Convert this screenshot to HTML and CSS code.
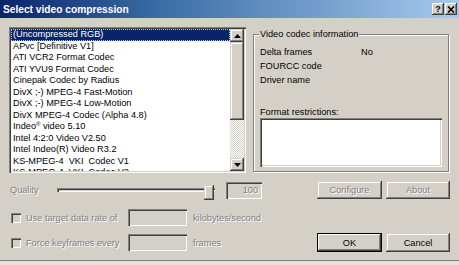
FILE: index.html
```html
<!DOCTYPE html>
<html lang="en">
<head>
    <meta charset="UTF-8">
    <title>Select video compression</title>
    <link rel="stylesheet" href="styles.css">
</head>
<body>
    <div class="window">
        <div class="titlebar">
            <span class="title">Select video compression</span>
            <div class="title-buttons">
                <span class="tbtn">?</span>
                <span class="tbtn">
                    <svg width="8" height="7" viewBox="0 0 8 7"><path d="M1 0.5 L7 6.5 M7 0.5 L1 6.5" stroke="#000" stroke-width="1.6"/></svg>
                </span>
            </div>
        </div>

        <div class="content">
            <div class="top">
                <div class="listbox">
                    <ul class="items">
                        <li class="selected">(Uncompressed RGB)</li>
                        <li>APvc [Definitive V1]</li>
                        <li>ATI VCR2 Format Codec</li>
                        <li>ATI YVU9 Format Codec</li>
                        <li>Cinepak Codec by Radius</li>
                        <li>DivX ;-) MPEG-4 Fast-Motion</li>
                        <li>DivX ;-) MPEG-4 Low-Motion</li>
                        <li>DivX MPEG-4 Codec (Alpha 4.8)</li>
                        <li>Indeo<sup>®</sup> video 5.10</li>
                        <li>Intel 4:2:0 Video V2.50</li>
                        <li>Intel Indeo(R) Video R3.2</li>
                        <li>KS-MPEG-4&nbsp; VKI&nbsp; Codec V1</li>
                        <li>KS-MPEG-4&nbsp; VKI&nbsp; Codec V2</li>
                    </ul>
                    <div class="scrollbar">
                        <div class="sb-btn">
                            <svg width="7" height="4" viewBox="0 0 7 4"><polygon points="3.5,0 7,4 0,4" fill="#000"/></svg>
                        </div>
                        <div class="sb-track"><div class="sb-thumb"></div></div>
                        <div class="sb-btn">
                            <svg width="7" height="4" viewBox="0 0 7 4"><polygon points="0,0 7,0 3.5,4" fill="#000"/></svg>
                        </div>
                    </div>
                </div>

                <div class="groupbox">
                    <span class="legend">Video codec information</span>
                    <div class="info">
                        <span>Delta frames</span><span>No</span>
                        <span>FOURCC code</span><span></span>
                        <span>Driver name</span><span></span>
                    </div>
                    <div class="restrict-label">Format restrictions:</div>
                    <div class="textarea"></div>
                </div>
            </div>

            <div class="row row-quality">
                <span class="quality-label disabled">Quality</span>
                <div class="slider">
                    <div class="slider-track"></div>
                    <div class="slider-thumb"></div>
                </div>
                <div class="edit edit-quality disabled">100</div>
                <div class="buttons">
                    <div class="btn disabled">Configure</div>
                    <div class="btn btn-narrow disabled">About</div>
                </div>
            </div>

            <div class="row row-rate">
                <span class="checkbox"></span>
                <span class="check-label disabled">Use target data rate of</span>
                <div class="edit"></div>
                <span class="unit disabled">kilobytes/second</span>
            </div>

            <div class="row row-keys">
                <span class="checkbox"></span>
                <span class="check-label disabled">Force keyframes every</span>
                <div class="edit"></div>
                <span class="unit disabled">frames</span>
                <div class="buttons">
                    <div class="btn btn-default">OK</div>
                    <div class="btn btn-narrow">Cancel</div>
                </div>
            </div>
        </div>
    </div>
</body>
</html>
```

FILE: styles.css
```css
* { box-sizing: border-box; }

body {
    margin: 0;
    background: #e4e2dc;
    font-family: "Liberation Sans", Arial, sans-serif;
    font-size: 9.2px;
    color: #000;
}

.window {
    width: 459px;
    height: 261px;
    background: #d4d0c8;
    border-bottom: 1px solid #808080;
}

/* title bar */
.titlebar {
    height: 18px;
    display: flex; align-items: center; justify-content: space-between;
    padding: 0 2px 0 3px;
    background: linear-gradient(to right, #0a246a, #3a6ea5 35%, #a6caf0);
}
.title { color: #fff; font-weight: bold; font-size: 10.2px; }
.title-buttons { display: flex; gap: 1px; }
.tbtn {
    width: 12px; height: 12px;
    display: flex; align-items: center; justify-content: center;
    background: #d4d0c8;
    font-weight: bold; font-size: 9px; line-height: 1;
    box-shadow: inset -1px -1px #404040, inset 1px 1px #fff, inset -2px -2px #808080;
}

.content { padding: 9px 9px 0 9px; }
.top { display: flex; }

/* sunken / raised helpers */
.listbox, .textarea, .edit, .checkbox, .slider-track {
    box-shadow: inset 1px 1px #808080, inset 2px 2px #404040, inset -1px -1px #fff, inset -2px -2px #d4d0c8;
}
.sb-btn, .sb-thumb, .btn, .slider-thumb {
    box-shadow: inset -1px -1px #404040, inset 1px 1px #d4d0c8, inset -2px -2px #808080, inset 2px 2px #fff;
}

/* list */
.listbox {
    width: 237px; height: 146px;
    background: #fff;
    padding: 2px;
    display: flex;
}
.items {
    flex: 1;
    margin: 0; padding: 0;
    list-style: none;
    overflow: hidden;
}
.items li {
    height: 11.5px; line-height: 11.5px;
    padding-left: 2px;
    white-space: nowrap;
}
.items li.selected { background: #0a246a; color: #fff; outline: 1px dotted #a6caf0; outline-offset: -1px; }
.items sup { font-size: 6px; line-height: 0; vertical-align: 3px; }

.scrollbar { width: 14px; display: flex; flex-direction: column; }
.sb-btn {
    height: 13px;
    background: #d4d0c8;
    display: flex; align-items: center; justify-content: center;
}
.sb-track {
    flex: 1;
    background: repeating-conic-gradient(#fff 0 25%, #d4d0c8 0 50%) 0 0 / 2px 2px;
}
.sb-thumb { height: 78px; background: #d4d0c8; }

/* group box */
.groupbox {
    position: relative;
    width: 196px; height: 138px;
    margin: 7px 0 0 7px;
    padding: 10px 6px 0 6px;
    border: 1px solid #808080;
    box-shadow: inset 1px 1px #fff, 1px 1px #fff;
}
.legend {
    position: absolute; top: -7px; left: 5px;
    padding: 0 1px;
    line-height: 12px;
    background: #d4d0c8;
}
.info { display: grid; grid-template-columns: 101px auto; line-height: 14px; }
.restrict-label { margin-top: 20px; line-height: 11px; }
.textarea { width: 182px; height: 49px; background: #fff; }

/* bottom rows */
.row { display: flex; align-items: center; }
.disabled { color: #808080; text-shadow: 1px 1px 0 #fff; }

.row-quality { margin-top: 7px; height: 20px; }
.quality-label { width: 47px; margin-left: 1px; }
.slider { position: relative; width: 158px; height: 20px; display: flex; align-items: center; }
.slider-track { width: 100%; height: 4px; }
.slider-thumb {
    position: absolute; left: 147px; top: 5px;
    width: 10px; height: 15px;
    background: #d4d0c8;
}
.edit { width: 59px; height: 17px; background: #d4d0c8; }
.edit-quality {
    width: 36px; margin-left: 11px;
    padding-right: 4px;
    text-align: right; line-height: 17px;
}

.buttons { margin-left: auto; display: flex; gap: 4px; }
.btn {
    width: 65px; height: 18px;
    background: #d4d0c8;
    display: flex; align-items: center; justify-content: center;
}
.btn-narrow { width: 64px; }
.row-keys .btn { height: 19px; }
.btn-default {
    border: 1px solid #000;
    box-shadow: inset -1px -1px #404040, inset 1px 1px #fff, inset -2px -2px #808080;
}

.row-rate { margin-top: 9px; height: 17px; }
.row-keys { margin-top: 7px; height: 19px; }
.checkbox { width: 10px; height: 10px; margin-left: 2px; background: #d4d0c8; }
.check-label { width: 102px; margin-left: 5px; }
.unit { margin-left: 6px; }
```
